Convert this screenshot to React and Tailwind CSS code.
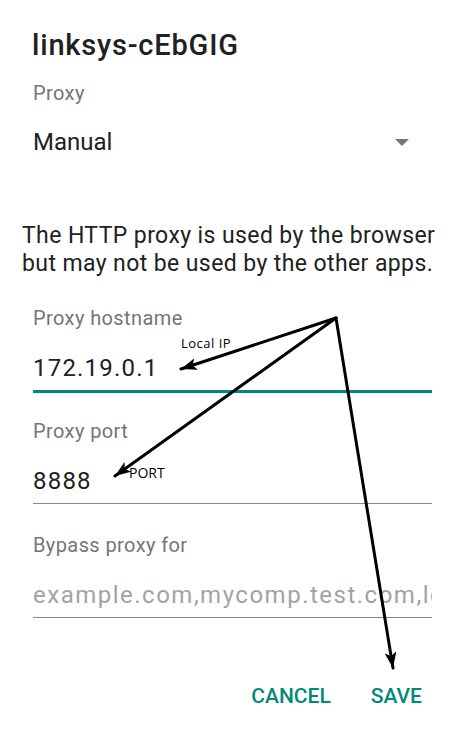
import React from "react";

function Field({ label, value, hint, focused, className = "" }) {
  return (
    <div className={`pl-[33px] pr-[25px] ${className}`}>
      <div className="text-[20px] leading-[24px] tracking-[0.4px] text-[#757575]">{label}</div>
      <div
        className={`mt-[23px] text-[24px] leading-[30px] whitespace-nowrap overflow-hidden ${
          hint ? "text-[#a3a3a3] tracking-[1.5px]" : "text-[#212121] tracking-[1.2px]"
        }`}
      >
        {value || hint}
      </div>
      {focused ? (
        <div className="mt-[7px] h-[3px] bg-[#00897b]" />
      ) : (
        <div className="mt-[7px] h-px bg-[#8a8a8a]" />
      )}
    </div>
  );
}

function Annotations() {
  return (
    <div className="absolute inset-0 pointer-events-none">
      <svg width="457" height="732" className="absolute inset-0">
        <defs>
          <marker
            id="head"
            markerUnits="userSpaceOnUse"
            markerWidth="18"
            markerHeight="12"
            refX="16"
            refY="6"
            orient="auto"
          >
            <path d="M0 0 L16 6 L0 12 L4 6 Z" fill="#000" />
          </marker>
        </defs>
        <g stroke="#000" strokeWidth="3" strokeLinecap="round" fill="none">
          <line x1="336" y1="318" x2="181" y2="369" markerEnd="url(#head)" />
          <line x1="336" y1="318" x2="115" y2="476" markerEnd="url(#head)" />
          <line x1="336" y1="318" x2="393" y2="668" markerEnd="url(#head)" />
        </g>
      </svg>
      <span className="absolute left-[181px] top-[335px] text-[13px] leading-[16px] tracking-[0.5px] text-black font-['Open_Sans',sans-serif]">
        Local IP
      </span>
      <span className="absolute left-[129px] top-[465px] text-[14px] leading-[16px] text-black font-['Open_Sans',sans-serif]">
        PORT
      </span>
    </div>
  );
}

export default function App() {
  return (
    <div className="relative w-[457px] h-[732px] bg-white overflow-hidden font-['Roboto',sans-serif]">
      {/* Header */}
      <div className="pt-[29px] pl-[32px] text-[29px] leading-[32px] tracking-[0.8px] font-medium text-[#212121]">
        linksys-cEbGIG
      </div>

      <div className="mt-[20px] pl-[33px] text-[20px] leading-[24px] tracking-[0.4px] text-[#757575]">Proxy</div>

      <div className="mt-[22px] pl-[33px] pr-[48px] flex items-center justify-between">
        <span className="text-[24px] leading-[30px] text-[#212121]">Manual</span>
        <span className="w-0 h-0 border-l-[7px] border-r-[7px] border-t-[7px] border-l-transparent border-r-transparent border-t-[#757575]" />
      </div>

      <p className="mt-[65px] pl-[22px] pr-[12px] text-[23px] leading-[28px] tracking-[0.4px] text-[#212121]">
        The HTTP proxy is used by the browser but may not be used by the other apps.
      </p>

      <Field className="mt-[28px]" label="Proxy hostname" value="172.19.0.1" focused />
      <Field className="mt-[26px]" label="Proxy port" value="8888" />
      <Field className="mt-[29px]" label="Bypass proxy for" hint="example.com,mycomp.test.com,localhost" />

      {/* Actions */}
      <div className="mt-[66px] pr-[35px] flex justify-end gap-[40px] text-[21px] leading-[24px] font-medium text-[#00897b]">
        <button>CANCEL</button>
        <button>SAVE</button>
      </div>

      <Annotations />
    </div>
  );
}
